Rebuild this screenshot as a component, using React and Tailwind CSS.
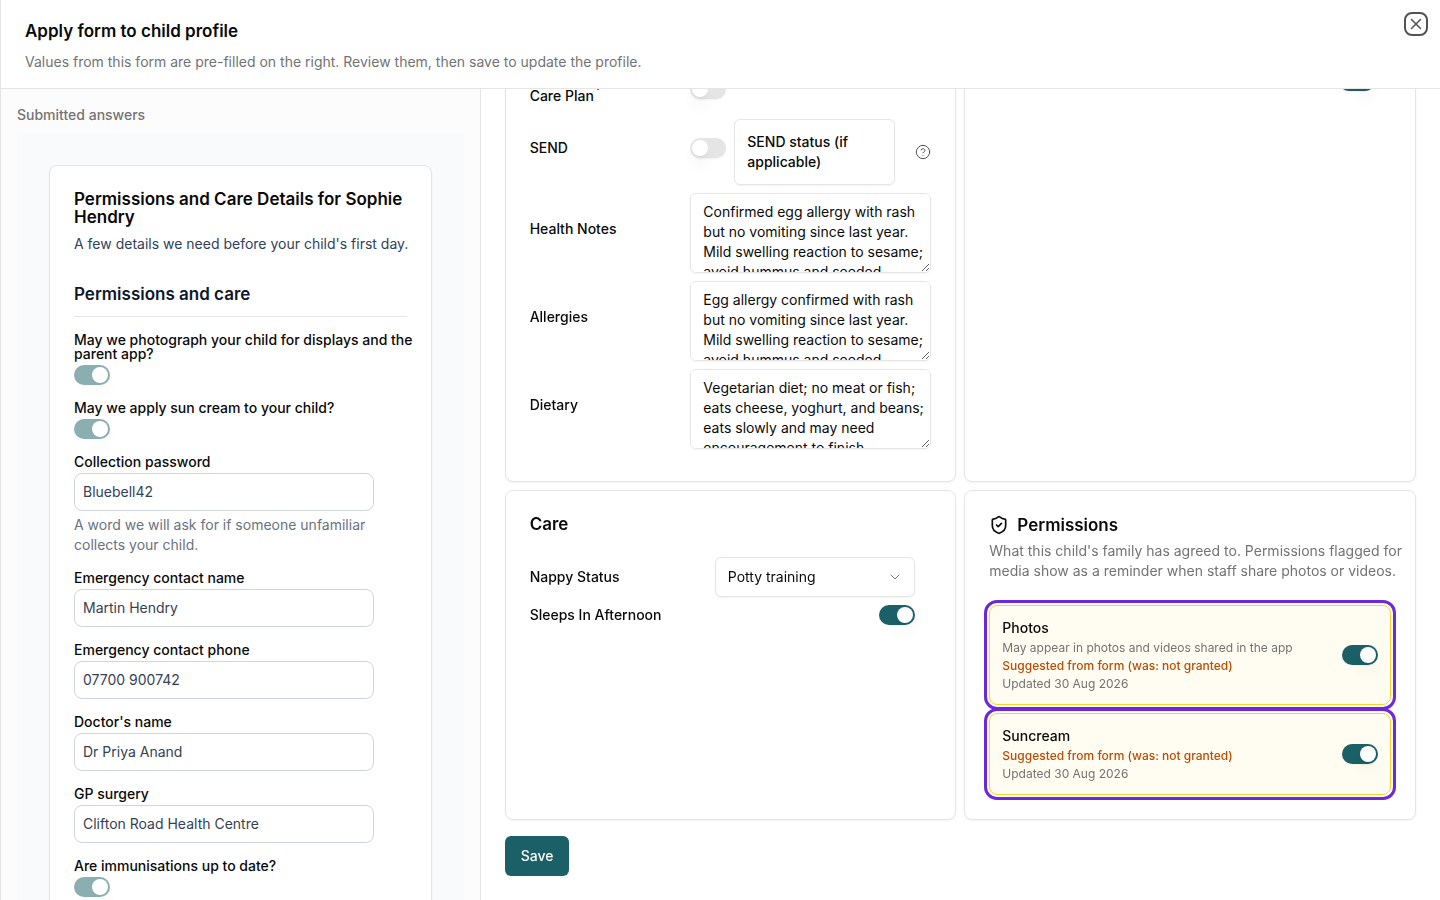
import { useState } from 'react';
import { X, ShieldCheck, CircleHelp, ChevronDown } from 'lucide-react';

const answers = [
    { id: 'photograph', label: 'May we photograph your child for displays and the parent app?', type: 'switch' },
    { id: 'sun-cream', label: 'May we apply sun cream to your child?', type: 'switch' },
    {
        id: 'password',
        label: 'Collection password',
        value: 'Bluebell42',
        hint: 'A word we will ask for if someone unfamiliar collects your child.',
    },
    { id: 'contact-name', label: 'Emergency contact name', value: 'Martin Hendry' },
    { id: 'contact-phone', label: 'Emergency contact phone', value: '07700 900742' },
    { id: 'doctor', label: "Doctor's name", value: 'Dr Priya Anand' },
    { id: 'surgery', label: 'GP surgery', value: 'Clifton Road Health Centre' },
    { id: 'immunisations', label: 'Are immunisations up to date?', type: 'switch' },
];

const notes = [
    {
        id: 'health-notes',
        label: 'Health Notes',
        value: 'Confirmed egg allergy with rash but no vomiting since last year. Mild swelling reaction to sesame; avoid hummus and seeded',
    },
    {
        id: 'allergies',
        label: 'Allergies',
        value: 'Egg allergy confirmed with rash but no vomiting since last year. Mild swelling reaction to sesame; avoid hummus and seeded',
    },
    {
        id: 'dietary',
        label: 'Dietary',
        value: 'Vegetarian diet; no meat or fish; eats cheese, yoghurt, and beans; eats slowly and may need encouragement to finish',
    },
];

const permissions = [
    { id: 'photos', name: 'Photos', description: 'May appear in photos and videos shared in the app' },
    { id: 'suncream', name: 'Suncream' },
];

function Switch({ id, label, defaultChecked = false, disabled = false }) {
    const [checked, setChecked] = useState(defaultChecked);

    return (
        <input
            id={id}
            type="checkbox"
            role="switch"
            aria-label={label}
            checked={checked}
            disabled={disabled}
            onChange={(e) => setChecked(e.target.checked)}
            className="flex h-5 w-9 shrink-0 cursor-pointer appearance-none items-center rounded-full bg-neutral-200 p-0.5 shadow-xs before:block before:size-4 before:rounded-full before:bg-white before:shadow-lg before:content-[''] checked:bg-[#1a6066] checked:before:translate-x-4 disabled:cursor-not-allowed disabled:opacity-50"
        />
    );
}

function Card({ children }) {
    return (
        <section className="min-w-0 rounded-lg border border-neutral-200 bg-white p-6 shadow-xs">
            {children}
        </section>
    );
}

function AnswerField({ field }) {
    return (
        <div className="flex flex-col gap-1">
            <label htmlFor={field.id} className="-mr-4 text-sm leading-none font-medium">
                {field.label}
            </label>
            {field.type === 'switch' ? (
                <Switch id={field.id} defaultChecked disabled />
            ) : (
                <input
                    id={field.id}
                    type="text"
                    readOnly
                    value={field.value}
                    className="h-[38px] w-full max-w-[300px] rounded-lg border border-gray-300 bg-white px-2 pb-0.5 text-sm text-gray-700"
                />
            )}
            {field.hint && <p className="text-sm text-gray-500">{field.hint}</p>}
        </div>
    );
}

function HealthRow({ id, label, children }) {
    return (
        <div className="grid grid-cols-[2fr_3fr] items-center">
            <label htmlFor={id} className="pb-2 text-sm leading-none font-medium">
                {label}
            </label>
            {children}
        </div>
    );
}

function PermissionRow({ permission }) {
    return (
        <div className="flex items-center justify-between gap-4 rounded-lg border border-amber-300 bg-[#fffcf2] p-3 outline-3 outline-offset-2 outline-[#6d28d9]">
            <div className="flex flex-col gap-0.5 text-xs">
                <label htmlFor={permission.id} className="text-sm font-medium">
                    {permission.name}
                </label>
                {permission.description && <p className="text-neutral-500">{permission.description}</p>}
                <p className="font-medium text-[#bb4d00]">Suggested from form (was: not granted)</p>
                <p className="text-neutral-500">Updated 30 Aug 2026</p>
            </div>
            <Switch id={permission.id} defaultChecked />
        </div>
    );
}

export default function App() {
    return (
        <div className="flex h-screen flex-col border-l border-neutral-200 bg-white font-['Inter',sans-serif] text-neutral-950">
            {/* Header */}
            <header className="flex items-start justify-between border-b border-neutral-200 py-4 pl-6">
                <div className="flex flex-col gap-1.5">
                    <h1 className="text-[17px] leading-[30px] font-semibold">Apply form to child profile</h1>
                    <p className="text-sm text-neutral-500">
                        Values from this form are pre-filled on the right. Review them, then save to update the profile.
                    </p>
                </div>
                <button
                    type="button"
                    aria-label="Close"
                    className="-mt-1 mr-3 flex size-6 items-center justify-center rounded-lg border-2 border-neutral-600 text-neutral-600"
                >
                    <X size={18} strokeWidth={2} className="shrink-0" />
                </button>
            </header>

            <div className="grid min-h-0 flex-1 grid-cols-[1fr_2fr]">
                {/* Submitted answers */}
                <aside className="min-w-0 overflow-hidden border-r border-neutral-200 bg-[#fcfcfc] p-4">
                    <h2 className="mb-2 text-sm font-medium text-neutral-500">Submitted answers</h2>
                    <div className="bg-slate-50 p-8">
                        <Card>
                            <h3 className="text-[17px] leading-[18px] font-semibold">
                                Permissions and Care Details for Sophie Hendry
                            </h3>
                            <p className="mt-2 -mr-4 text-sm text-slate-700">
                                A few details we need before your child's first day.
                            </p>
                            <h4 className="mt-6 mb-4 border-b border-neutral-200 pt-0.5 pb-2 text-[17px] leading-7 font-semibold text-slate-900">
                                Permissions and care
                            </h4>
                            <div className="flex flex-col gap-4">
                                {answers.map((field) => (
                                    <AnswerField key={field.id} field={field} />
                                ))}
                            </div>
                        </Card>
                    </div>
                </aside>

                {/* Profile form, resting at the end of its scroll */}
                <form className="flex min-w-0 flex-col justify-end overflow-hidden p-6">
                    <div className="grid grid-cols-2 gap-2">
                        {/* Health */}
                        <Card>
                            <div className="flex flex-col gap-2 pt-6 pb-2">
                                <HealthRow id="care-plan" label="Education, Health and Care Plan">
                                    <div className="pb-2">
                                        <Switch id="care-plan" />
                                    </div>
                                </HealthRow>
                                <HealthRow id="send" label="SEND">
                                    <div className="flex items-center gap-2">
                                        <div className="pb-2">
                                            <Switch id="send" />
                                        </div>
                                        <button
                                            type="button"
                                            className="min-w-0 flex-1 rounded-md border border-neutral-200 p-3 text-left text-sm font-medium shadow-xs"
                                        >
                                            SEND status (if applicable)
                                        </button>
                                        <CircleHelp size={16} strokeWidth={1.5} className="ml-3 text-neutral-600" />
                                    </div>
                                </HealthRow>
                                {notes.map((note) => (
                                    <HealthRow key={note.id} id={note.id} label={note.label}>
                                        <textarea
                                            id={note.id}
                                            defaultValue={note.value}
                                            className="h-20 w-full [scrollbar-width:none] rounded-md border border-neutral-200 bg-white py-2 pr-1 pl-3 text-sm shadow-xs"
                                        />
                                    </HealthRow>
                                ))}
                            </div>
                        </Card>

                        <Card>
                            <div className="flex justify-end pt-5 pr-4">
                                <Switch id="funding" label="Funded hours" defaultChecked />
                            </div>
                        </Card>

                        {/* Care */}
                        <Card>
                            <h3 className="mb-6 text-[17px] leading-[18px] font-semibold">Care</h3>
                            <div className="flex flex-col gap-2 pr-4">
                                <div className="flex items-center justify-between">
                                    <label htmlFor="nappy" className="text-sm font-medium">Nappy Status</label>
                                    <div className="relative w-[52%]">
                                        <select
                                            id="nappy"
                                            className="h-10 w-full appearance-none rounded-md border border-neutral-200 bg-white px-3 text-sm shadow-xs"
                                        >
                                            <option>Potty training</option>
                                            <option>Nappies</option>
                                        </select>
                                        <ChevronDown
                                            size={16}
                                            strokeWidth={1.5}
                                            className="pointer-events-none absolute top-3 right-3 text-neutral-500"
                                        />
                                    </div>
                                </div>
                                <div className="flex items-center justify-between">
                                    <label htmlFor="sleeps" className="text-sm font-medium">Sleeps In Afternoon</label>
                                    <Switch id="sleeps" defaultChecked />
                                </div>
                            </div>
                        </Card>

                        {/* Permissions */}
                        <Card>
                            <h3 className="flex items-center gap-2 text-[17px] leading-5 font-semibold">
                                <ShieldCheck size={20} />
                                Permissions
                            </h3>
                            <p className="mt-1.5 -mr-4 mb-6 text-sm text-neutral-500">
                                What this child's family has agreed to. Permissions flagged for media show as a reminder when
                                staff share photos or videos.
                            </p>
                            <div className="flex flex-col gap-2">
                                {permissions.map((permission) => (
                                    <PermissionRow key={permission.id} permission={permission} />
                                ))}
                            </div>
                        </Card>
                    </div>
                    <button
                        type="submit"
                        className="mt-4 h-10 shrink-0 self-start rounded-md bg-[#1a6066] px-4 text-sm font-medium text-neutral-50"
                    >
                        Save
                    </button>
                </form>
            </div>
        </div>
    );
}
